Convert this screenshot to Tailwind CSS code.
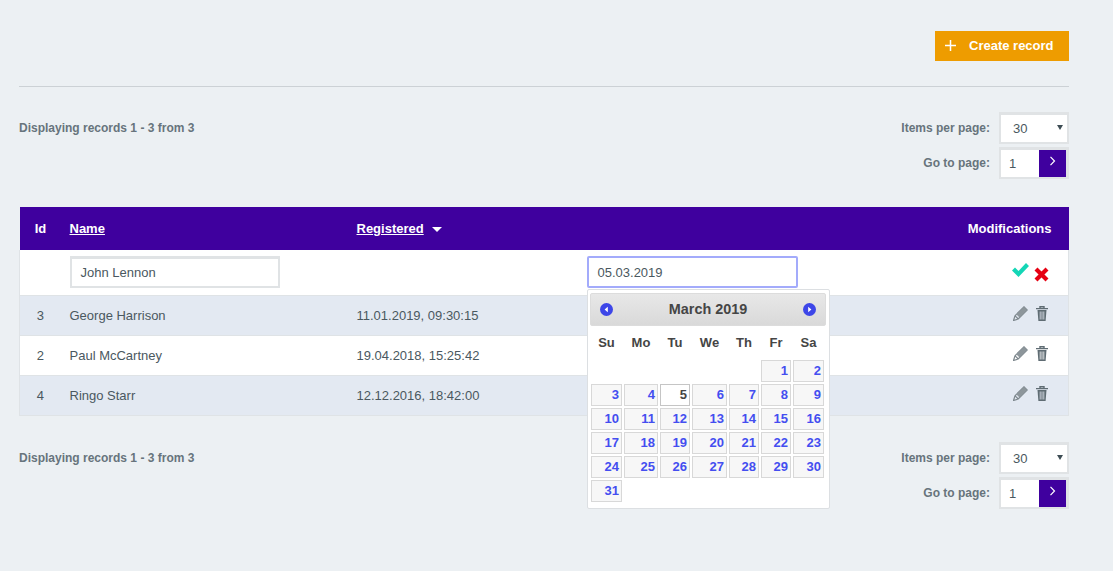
<!DOCTYPE html>
<html lang="en">
<head>
    <meta charset="UTF-8">
    <title>Records</title>
    <script src="https://cdn.jsdelivr.net/npm/@tailwindcss/browser@4"></script>
</head>
<body class="bg-[#ecf0f3] font-['Liberation_Sans',Arial,sans-serif] text-[13px] text-[#4a5860]">
<div class="w-[1113px] h-[571px] overflow-hidden pl-[19px] pr-[44px] pt-[31px]">

    <!-- top button -->
    <div class="flex justify-end pb-[25px] border-b border-[#ccd1d5] h-[56px]">
        <button class="flex items-center w-[134px] h-[30px] bg-[#ee9c00] text-white font-bold text-[13px] pl-[10px]">
            <svg class="w-[11px] h-[11px] mr-[13px] mb-[1px]" viewBox="0 0 11 11"><path d="M5.5 0v11M0 5.5h11" stroke="#fff" stroke-width="1.5" fill="none"/></svg>
            Create record
        </button>
    </div>

    <!-- top pager -->
    <div class="flex justify-between pt-[25px] h-[120px]">
        <div class="text-[12px] font-bold text-[#67747c] pt-[7px]">Displaying records 1 - 3 from 3</div>
        <div class="flex flex-col gap-[3px] items-end">
            <div class="flex items-center gap-[9px]">
                <span class="text-[12px] font-bold text-[#67747c]">Items per page:</span>
                <div class="relative w-[70px] h-[32px] bg-white border-2 border-t-[3px] border-[#e0e3e5] pl-[12px] leading-[27px]">
                    30
                    <span class="absolute right-[4px] top-[10px] w-0 h-0 border-x-[3px] border-x-transparent border-t-[5px] border-t-[#3e4d55]"></span>
                </div>
            </div>
            <div class="flex items-center gap-[9px]">
                <span class="text-[12px] font-bold text-[#67747c]">Go to page:</span>
                <div class="flex justify-between w-[70px] h-[32px] bg-white border-2 border-t-[3px] border-r-[3px] border-[#e0e3e5] pl-[8px] leading-[27px]">
                    1
                    <span class="flex items-start justify-center pt-[6px] w-[27px] h-[27px] bg-[#3f009e]">
                        <svg class="w-[7px] h-[10px]" viewBox="0 0 7 10"><path d="M1.5 .8l4 4.2-4 4.2" stroke="#fff" stroke-width="1.2" fill="none"/></svg>
                    </span>
                </div>
            </div>
        </div>
    </div>

    <!-- table -->
    <div class="relative">
        <table class="w-[1050px] table-fixed border-collapse">
            <thead>
                <tr class="h-[43px] bg-[#3f009e] text-white font-bold">
                    <th class="w-[44px] pr-[2px] text-center font-bold">Id</th>
                    <th class="w-[287px] pl-[6px] text-left font-bold"><a class="underline">Name</a></th>
                    <th class="w-[230px] pl-[6px] text-left font-bold">
                        <a class="underline">Registered</a>
                        <span class="inline-block ml-[5px] align-middle w-0 h-0 border-x-[5px] border-x-transparent border-t-[5px] border-t-white"></span>
                    </th>
                    <th class="w-[250px]"></th>
                    <th class="pr-[17px] text-right font-bold">Modifications</th>
                </tr>
            </thead>
            <tbody>
                <tr class="h-[45px] bg-white border-x border-b border-[#dfe3e6]">
                    <td></td>
                    <td class="pl-[6px]">
                        <div class="w-[210px] h-[32px] border-2 border-t-[3px] border-[#e0e3e5] pl-[9px] leading-[28px]">John Lennon</div>
                    </td>
                    <td></td>
                    <td class="pl-[6px]">
                        <div class="w-[211px] h-[32px] border-2 border-[#a3abfb] rounded-[2px] pl-[9px] leading-[29px]">05.03.2019</div>
                    </td>
                    <td class="pr-[19px]">
                        <div class="flex justify-end gap-[5px] items-start">
                            <svg class="w-[17px] h-[14px]" viewBox="0 0 17 14"><path d="M0 7.5L3 4.5 6.5 8 14 0l3 3L6.5 14z" fill="#14d6b6"/></svg>
                            <svg class="w-[15px] h-[15px] mt-[4px]" viewBox="0 0 15 15"><path d="M2 2l11 11M13 2L2 13" stroke="#e60012" stroke-width="4.2" fill="none"/></svg>
                        </div>
                    </td>
                </tr>
                <tr class="h-[40px] bg-[#e3e9f2] border-x border-b border-[#dfe3e6]">
                    <td class="text-center pr-[3px] pt-[1px]">3</td>
                    <td class="pl-[6px] pt-[1px]">George Harrison</td>
                    <td class="pl-[6px] pt-[1px]">11.01.2019, 09:30:15</td>
                    <td></td>
                    <td class="pr-[20px]">
                        <div class="flex justify-end gap-[8px] pb-[4px]">
                            <svg class="w-[15px] h-[15px]" viewBox="0 0 15 15"><path d="M.5 14.5l1.5-4.8L11 .8l3.2 3.2L5.2 13zM2 9.7L5.2 13" stroke="#7d878d" stroke-width="1.2" fill="none"/><path d="M3.5 8.5L11 1l3 3-7.5 7.5z" fill="#8d969b"/></svg>
                            <svg class="w-[12px] h-[15px]" viewBox="0 0 12 15"><path d="M0 2.6h12M4 2.5V.8h4v1.7" stroke="#5f6c73" stroke-width="1.4" fill="none"/><path d="M1.5 4h9l-.9 11H2.4z" fill="#5f6c73"/><path d="M4.2 5.5v8M6 5.5v8M7.8 5.5v8" stroke="#e3e9f2" stroke-width=".8"/></svg>
                        </div>
                    </td>
                </tr>
                <tr class="h-[40px] bg-white border-x border-b border-[#dfe3e6]">
                    <td class="text-center pr-[3px] pt-[1px]">2</td>
                    <td class="pl-[6px] pt-[1px]">Paul McCartney</td>
                    <td class="pl-[6px] pt-[1px]">19.04.2018, 15:25:42</td>
                    <td></td>
                    <td class="pr-[20px]">
                        <div class="flex justify-end gap-[8px] pb-[4px]">
                            <svg class="w-[15px] h-[15px]" viewBox="0 0 15 15"><path d="M.5 14.5l1.5-4.8L11 .8l3.2 3.2L5.2 13zM2 9.7L5.2 13" stroke="#7d878d" stroke-width="1.2" fill="none"/><path d="M3.5 8.5L11 1l3 3-7.5 7.5z" fill="#8d969b"/></svg>
                            <svg class="w-[12px] h-[15px]" viewBox="0 0 12 15"><path d="M0 2.6h12M4 2.5V.8h4v1.7" stroke="#5f6c73" stroke-width="1.4" fill="none"/><path d="M1.5 4h9l-.9 11H2.4z" fill="#5f6c73"/><path d="M4.2 5.5v8M6 5.5v8M7.8 5.5v8" stroke="#fff" stroke-width=".8"/></svg>
                        </div>
                    </td>
                </tr>
                <tr class="h-[40px] bg-[#e3e9f2] border-x border-b border-[#dfe3e6]">
                    <td class="text-center pr-[3px] pt-[1px]">4</td>
                    <td class="pl-[6px] pt-[1px]">Ringo Starr</td>
                    <td class="pl-[6px] pt-[1px]">12.12.2016, 18:42:00</td>
                    <td></td>
                    <td class="pr-[20px]">
                        <div class="flex justify-end gap-[8px] pb-[4px]">
                            <svg class="w-[15px] h-[15px]" viewBox="0 0 15 15"><path d="M.5 14.5l1.5-4.8L11 .8l3.2 3.2L5.2 13zM2 9.7L5.2 13" stroke="#7d878d" stroke-width="1.2" fill="none"/><path d="M3.5 8.5L11 1l3 3-7.5 7.5z" fill="#8d969b"/></svg>
                            <svg class="w-[12px] h-[15px]" viewBox="0 0 12 15"><path d="M0 2.6h12M4 2.5V.8h4v1.7" stroke="#5f6c73" stroke-width="1.4" fill="none"/><path d="M1.5 4h9l-.9 11H2.4z" fill="#5f6c73"/><path d="M4.2 5.5v8M6 5.5v8M7.8 5.5v8" stroke="#e3e9f2" stroke-width=".8"/></svg>
                        </div>
                    </td>
                </tr>
            </tbody>
        </table>

        <!-- datepicker popup -->
        <div class="absolute left-[568px] top-[82px] w-[243px] h-[220px] bg-white border border-[#dcdfe2] rounded-[2px] p-[3px] z-10">
            <div class="flex items-center justify-between h-[33px] -ml-[1px] px-[9px] rounded-[2px] bg-gradient-to-b from-[#e8e8e8] to-[#d9d9d9] border border-[#dcdcdc]">
                <svg class="w-[13px] h-[13px]" viewBox="0 0 13 13"><circle cx="6.5" cy="6.5" r="6.5" fill="#3d46e8"/><path d="M7.8 3.8v5.4L4.6 6.5z" fill="#fff"/></svg>
                <span class="font-bold text-[14.4px] text-[#454545]">March 2019</span>
                <svg class="w-[13px] h-[13px]" viewBox="0 0 13 13"><circle cx="6.5" cy="6.5" r="6.5" fill="#3d46e8"/><path d="M5.2 3.8v5.4l3.2-2.7z" fill="#fff"/></svg>
            </div>
            <div class="grid grid-cols-[31px_34px_30px_35px_30px_30px_31px] gap-[2px] font-bold text-[#454545] h-[34px] items-center text-center">
                <span>Su</span><span>Mo</span><span>Tu</span><span>We</span><span>Th</span><span>Fr</span><span>Sa</span>
            </div>
            <div class="grid grid-cols-[31px_34px_30px_35px_30px_30px_31px] auto-rows-[22px] gap-[2px] font-bold text-[#444ef0] text-right">
                <span class="col-start-6 bg-[#f7f7f7] border border-[#d8d8d8] pr-[2px] leading-[20px]">1</span>
                <span class="bg-[#f7f7f7] border border-[#d8d8d8] pr-[2px] leading-[20px]">2</span>
                <span class="bg-[#f7f7f7] border border-[#d8d8d8] pr-[2px] leading-[20px]">3</span>
                <span class="bg-[#f7f7f7] border border-[#d8d8d8] pr-[2px] leading-[20px]">4</span>
                <span class="bg-white border border-[#c5c5c5] pr-[2px] leading-[20px] text-[#454545]">5</span>
                <span class="bg-[#f7f7f7] border border-[#d8d8d8] pr-[2px] leading-[20px]">6</span>
                <span class="bg-[#f7f7f7] border border-[#d8d8d8] pr-[2px] leading-[20px]">7</span>
                <span class="bg-[#f7f7f7] border border-[#d8d8d8] pr-[2px] leading-[20px]">8</span>
                <span class="bg-[#f7f7f7] border border-[#d8d8d8] pr-[2px] leading-[20px]">9</span>
                <span class="bg-[#f7f7f7] border border-[#d8d8d8] pr-[2px] leading-[20px]">10</span>
                <span class="bg-[#f7f7f7] border border-[#d8d8d8] pr-[2px] leading-[20px]">11</span>
                <span class="bg-[#f7f7f7] border border-[#d8d8d8] pr-[2px] leading-[20px]">12</span>
                <span class="bg-[#f7f7f7] border border-[#d8d8d8] pr-[2px] leading-[20px]">13</span>
                <span class="bg-[#f7f7f7] border border-[#d8d8d8] pr-[2px] leading-[20px]">14</span>
                <span class="bg-[#f7f7f7] border border-[#d8d8d8] pr-[2px] leading-[20px]">15</span>
                <span class="bg-[#f7f7f7] border border-[#d8d8d8] pr-[2px] leading-[20px]">16</span>
                <span class="bg-[#f7f7f7] border border-[#d8d8d8] pr-[2px] leading-[20px]">17</span>
                <span class="bg-[#f7f7f7] border border-[#d8d8d8] pr-[2px] leading-[20px]">18</span>
                <span class="bg-[#f7f7f7] border border-[#d8d8d8] pr-[2px] leading-[20px]">19</span>
                <span class="bg-[#f7f7f7] border border-[#d8d8d8] pr-[2px] leading-[20px]">20</span>
                <span class="bg-[#f7f7f7] border border-[#d8d8d8] pr-[2px] leading-[20px]">21</span>
                <span class="bg-[#f7f7f7] border border-[#d8d8d8] pr-[2px] leading-[20px]">22</span>
                <span class="bg-[#f7f7f7] border border-[#d8d8d8] pr-[2px] leading-[20px]">23</span>
                <span class="bg-[#f7f7f7] border border-[#d8d8d8] pr-[2px] leading-[20px]">24</span>
                <span class="bg-[#f7f7f7] border border-[#d8d8d8] pr-[2px] leading-[20px]">25</span>
                <span class="bg-[#f7f7f7] border border-[#d8d8d8] pr-[2px] leading-[20px]">26</span>
                <span class="bg-[#f7f7f7] border border-[#d8d8d8] pr-[2px] leading-[20px]">27</span>
                <span class="bg-[#f7f7f7] border border-[#d8d8d8] pr-[2px] leading-[20px]">28</span>
                <span class="bg-[#f7f7f7] border border-[#d8d8d8] pr-[2px] leading-[20px]">29</span>
                <span class="bg-[#f7f7f7] border border-[#d8d8d8] pr-[2px] leading-[20px]">30</span>
                <span class="bg-[#f7f7f7] border border-[#d8d8d8] pr-[2px] leading-[20px]">31</span>
            </div>
        </div>
    </div>

    <!-- bottom pager -->
    <div class="flex justify-between pt-[26px]">
        <div class="text-[12px] font-bold text-[#67747c] pt-[7px]">Displaying records 1 - 3 from 3</div>
        <div class="flex flex-col gap-[3px] items-end">
            <div class="flex items-center gap-[9px]">
                <span class="text-[12px] font-bold text-[#67747c]">Items per page:</span>
                <div class="relative w-[70px] h-[32px] bg-white border-2 border-t-[3px] border-[#e0e3e5] pl-[12px] leading-[27px]">
                    30
                    <span class="absolute right-[4px] top-[10px] w-0 h-0 border-x-[3px] border-x-transparent border-t-[5px] border-t-[#3e4d55]"></span>
                </div>
            </div>
            <div class="flex items-center gap-[9px]">
                <span class="text-[12px] font-bold text-[#67747c]">Go to page:</span>
                <div class="flex justify-between w-[70px] h-[32px] bg-white border-2 border-t-[3px] border-r-[3px] border-[#e0e3e5] pl-[8px] leading-[27px]">
                    1
                    <span class="flex items-start justify-center pt-[6px] w-[27px] h-[27px] bg-[#3f009e]">
                        <svg class="w-[7px] h-[10px]" viewBox="0 0 7 10"><path d="M1.5 .8l4 4.2-4 4.2" stroke="#fff" stroke-width="1.2" fill="none"/></svg>
                    </span>
                </div>
            </div>
        </div>
    </div>
</div>
</body>
</html>
